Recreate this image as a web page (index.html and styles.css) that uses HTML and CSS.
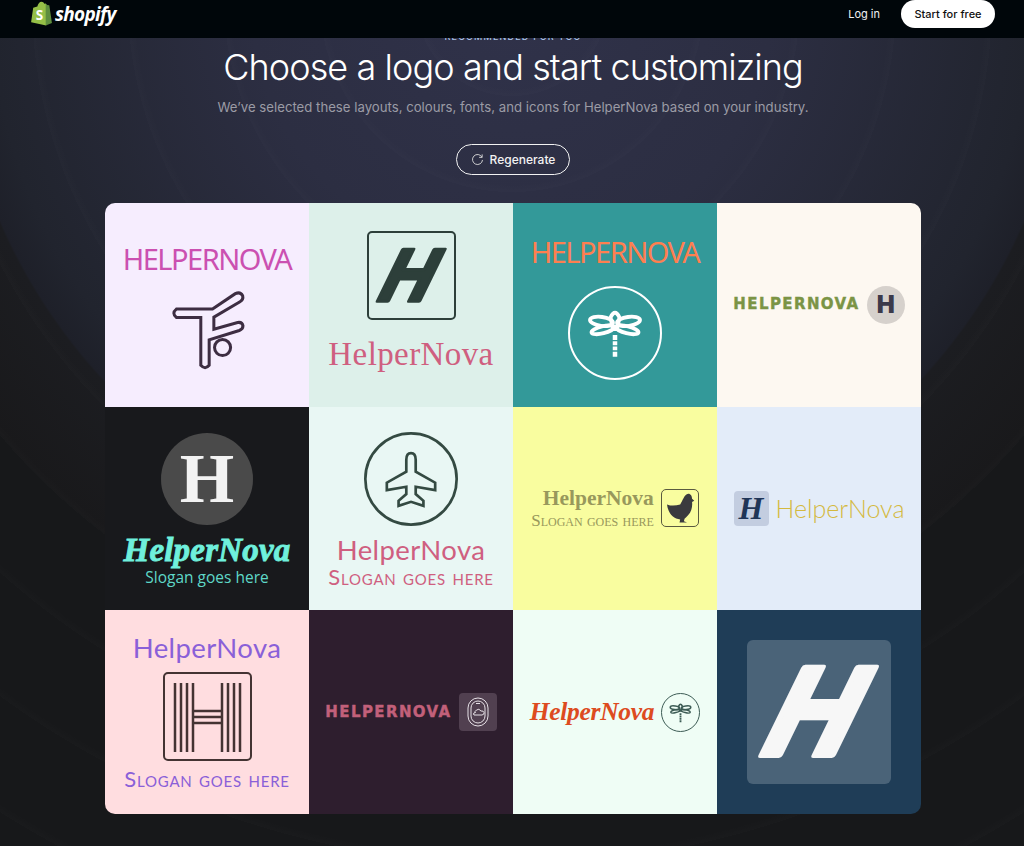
FILE: index.html
```html
<!DOCTYPE html>
<html>
<head>
    <title>Choose a logo</title>
    <link rel="stylesheet" href="styles.css">
</head>
<body>
<svg class="sprite" width="0" height="0">
  <symbol id="dragonfly" viewBox="0 0 280 280">
    <g fill="none" stroke="currentColor" stroke-width="12">
      <ellipse cx="98" cy="104" rx="36" ry="14" transform="rotate(8 98 104)"/>
      <ellipse cx="182" cy="104" rx="36" ry="14" transform="rotate(-8 182 104)"/>
      <ellipse cx="102" cy="130" rx="36" ry="11" transform="rotate(-14 102 130)"/>
      <ellipse cx="178" cy="130" rx="36" ry="11" transform="rotate(14 178 130)"/>
      <path d="M126 92 Q140 62 154 92 L146 128 H134 Z"/>
    </g>
    <path fill="currentColor" d="M133 146h14v16h-14zM133 166h14v12h-14zM133 182h14v12h-14zM133 198h14v16h-14z"/>
  </symbol>
</svg>

<header class="topbar">
  <a class="brand">
    <svg class="brand-bag" viewBox="0 0 21 24">
      <path fill="#95bf47" d="M1 20.500 3 6.500 7 5.200C7.600 2.600 9 .6 11 .6c1.300 0 2.200.9 2.700 2l1.300-.3L16 5l-.5 18.500z"/>
      <path fill="#5e8e3e" d="M15 2.300l1.500 1.500 1.700.2c.2 0 .3.100.3.300L21 21l-6 2.500z"/>
      <text class="brand-s" x="5.500" y="18">S</text>
    </svg>
    <span class="brand-name">shopify</span>
  </a>
  <nav class="topbar-nav">
    <a class="login">Log in</a>
    <a class="start-btn">Start for free</a>
  </nav>
</header>

<main class="page">
  <p class="eyebrow">Recommended for you</p>
  <h1>Choose a logo and start customizing</h1>
  <p class="sub">We’ve selected these layouts, colours, fonts, and icons for HelperNova based on your industry.</p>
  <button type="button" class="regen-btn">
    <svg viewBox="0 0 14 14" class="regen-icon"><path d="M11.800 4.500A5.400 5.400 0 1 0 12.400 7.500M12 1.500v3.200H8.800"/></svg>
    Regenerate
  </button>

  <section class="logo-grid">
    <div class="cell c1">
      <span class="wordmark">HELPERNOVA</span>
      <svg class="gymnast" viewBox="0 0 230 245">
        <path d="M22 60H130L198 14Q213 7 220 20Q223 32 212 38L134 84V120L205 100Q219 98 221 110Q221 120 210 124L120 152V228Q108 242 95 228V85H22Q7 72 22 60Z"/>
        <circle cx="160" cy="175" r="24"/>
      </svg>
    </div>

    <div class="cell c2">
      <div class="mark-box">
        <svg viewBox="0 0 100 100"><text class="brush-h" x="50" y="80" transform="translate(24 0) skewX(-26)">H</text></svg>
      </div>
      <span class="wordmark">HelperNova</span>
    </div>

    <div class="cell c3">
      <span class="wordmark">HELPERNOVA</span>
      <div class="ring"><svg><use href="#dragonfly"/></svg></div>
    </div>

    <div class="cell row c4">
      <span class="wordmark">HELPERNOVA</span>
      <div class="badge">H</div>
    </div>

    <div class="cell c5">
      <div class="disc">H</div>
      <span class="wordmark">HelperNova</span>
      <span class="slogan">Slogan goes here</span>
    </div>

    <div class="cell c6">
      <svg class="plane" viewBox="0 0 280 280">
        <circle cx="140" cy="140" r="136"/>
        <path d="M126 83Q126 63 140 63Q154 63 154 83V118L212 151V173L154 163V185L177 205V220L140 208L103 220V205L126 185V163L68 173V151L126 118Z"/>
      </svg>
      <span class="wordmark">HelperNova</span>
      <span class="slogan">Slogan goes here</span>
    </div>

    <div class="cell row c7">
      <div class="stack">
        <span class="wordmark">HelperNova</span>
        <span class="slogan">Slogan goes here</span>
      </div>
      <div class="hen-box">
        <svg viewBox="0 0 115 115"><path d="M16 46C30 52 45 50 58 46C66 36 70 14 84 12C92 12 96 20 96 28L103 34L96 38C98 55 94 72 78 86L72 92L70 100L80 104H56L58 94C38 92 20 78 16 46Z"/></svg>
      </div>
    </div>

    <div class="cell row c8">
      <div class="gothic">H</div>
      <span class="wordmark">HelperNova</span>
    </div>

    <div class="cell c9">
      <span class="wordmark">HelperNova</span>
      <div class="stripe-box">
        <svg viewBox="0 0 85 85">
          <path d="M10 9V78M16 9V78M22 9V78M28 9V78M57 9V78M63 9V78M69 9V78M75 9V78M28 37H57M28 43H57M28 49H57"/>
        </svg>
      </div>
      <span class="slogan">Slogan goes here</span>
    </div>

    <div class="cell row c10">
      <span class="wordmark">HELPERNOVA</span>
      <div class="window-box">
        <svg viewBox="0 0 38 38">
          <rect x="9" y="5" width="20" height="28" rx="10"/>
          <rect x="12" y="8" width="14" height="22" rx="7"/>
          <path d="M15 22h8q2.500-.5 2-2.500t-3-1.500q-2-3-4.500-1t-1 2.500q-2 0-2 1.500zM17 10.500h4"/>
        </svg>
      </div>
    </div>

    <div class="cell row c11">
      <span class="wordmark">HelperNova</span>
      <div class="small-ring"><svg><use href="#dragonfly"/></svg></div>
    </div>

    <div class="cell c12">
      <div class="mark-box">
        <svg viewBox="0 0 100 100"><text class="brush-h" x="50" y="80" transform="translate(24 0) skewX(-26)">H</text></svg>
      </div>
    </div>
  </section>
</main>
</body>
</html>
```

FILE: styles.css
```css
html, body {
    margin: 0;
    padding: 0;
}
body {
    font-family: Inter, "Liberation Sans", sans-serif;
    color: #fff;
    background-color: #17181a;
    background-image:
        repeating-radial-gradient(circle at 50% 0, rgba(255,255,255,0) 0, rgba(255,255,255,0) 88px, rgba(255,255,255,0.01) 96px),
        radial-gradient(circle at 50% 0, #30324a 0, #2c2e42 260px, #21242e 520px, #1e2029 557px, #1c1d21 559px, #19191b 670px, #17181a 672px);
    background-repeat: no-repeat;
    height: 846px;
    overflow: hidden;
}
.sprite {
    position: absolute;
}

/* top bar */
.topbar {
    position: fixed;
    top: 0;
    left: 0;
    right: 0;
    height: 28px;
    padding: 0 29px 10px 30px;
    background-color: #00060a;
    display: flex;
    justify-content: space-between;
    align-items: center;
    z-index: 2;
}
.brand {
    display: flex;
    align-items: center;
    gap: 3px;
    margin-top: -1px;
}
.brand-bag {
    width: 22px;
    height: 25px;
}
.brand-s {
    font-family: "Open Sans", sans-serif;
    font-weight: 700;
    font-size: 13px;
    fill: #fff;
}
.brand-name {
    font-family: "Open Sans", sans-serif;
    font-weight: 700;
    font-style: italic;
    font-size: 19px;
    letter-spacing: -0.7px;
    color: #fff;
}
.topbar-nav {
    display: flex;
    align-items: center;
    gap: 21px;
}
.login {
    font-size: 11px;
    font-weight: 400;
    color: #f2f2f2;
}
.start-btn {
    background-color: #fff;
    color: #111;
    font-size: 11px;
    font-weight: 500;
    width: 94px;
    height: 28px;
    border-radius: 14px;
    display: flex;
    align-items: center;
    justify-content: center;
}

/* hero */
.page {
    display: flex;
    flex-direction: column;
    align-items: center;
    padding: 31px 0 0 2px;
}
.eyebrow {
    margin: 0;
    font-size: 9px;
    line-height: 12px;
    font-weight: 500;
    letter-spacing: 1.2px;
    text-transform: uppercase;
    color: #a9c4e8;
}
h1 {
    margin: 1px 0 0;
    font-size: 36px;
    line-height: 46px;
    font-weight: 300;
    letter-spacing: -0.9px;
}
.sub {
    margin: 8px 0 0;
    font-size: 13.2px;
    line-height: 19px;
    color: #9b9ba5;
}
.regen-btn {
    margin-top: 27px;
    width: 114px;
    height: 31px;
    background: none;
    border: 1.5px solid #f2f2f2;
    border-radius: 16px;
    color: #f2f2f2;
    font-family: inherit;
    font-size: 12px;
    font-weight: 500;
    display: flex;
    align-items: center;
    justify-content: center;
    gap: 6px;
    padding: 0;
}
.regen-icon {
    width: 13px;
    height: 13px;
    fill: none;
    stroke: #d8d8d8;
    stroke-width: 1;
}

/* logo grid */
.logo-grid {
    margin-top: 28px;
    display: grid;
    grid-template-columns: repeat(4, 204px);
    grid-auto-rows: 203.67px;
    border-radius: 10px;
    overflow: hidden;
}
.cell {
    display: flex;
    flex-direction: column;
    align-items: center;
    justify-content: center;
    line-height: 1;
    box-sizing: border-box;
}
.cell.row {
    flex-direction: row;
    gap: 7px;
}
.wordmark, .slogan {
    display: block;
    white-space: nowrap;
}
.slogan {
    font-variant: small-caps;
}

.c1 {
    background-color: #f6edfe;
    padding-top: 5px;
}
.c1 .wordmark, .c3 .wordmark {
    font-family: "Noto Sans", sans-serif;
    font-size: 29px;
    letter-spacing: -1.5px;
}
.c1 .wordmark {
    color: #cb50b1;
    margin-bottom: 16px;
}
.gymnast {
    width: 77px;
    height: 82px;
}
.gymnast path, .gymnast circle {
    fill: none;
    stroke: #3d2d42;
    stroke-width: 9;
}

.c2 {
    background-color: #ddf0ea;
    padding-bottom: 8px;
}
.c2 .wordmark {
    font-family: "Liberation Serif", serif;
    font-size: 33px;
    letter-spacing: 0.4px;
    color: #cf5f80;
    margin-top: 18px;
}
.mark-box {
    width: 85px;
    height: 85px;
    border: 2px solid #2d3f3a;
    border-radius: 5px;
}
.mark-box svg {
    display: block;
    width: 100%;
    height: 100%;
    overflow: visible;
}
.brush-h {
    font-family: "Open Sans", sans-serif;
    font-weight: 700;
    font-size: 85px;
    text-anchor: middle;
    fill: #2d3f3a;
    stroke: #2d3f3a;
    stroke-width: 4;
    stroke-linejoin: round;
}

.c3 {
    background-color: #339999;
    padding-top: 8px;
}
.c3 .wordmark {
    color: #ff7f50;
    margin-bottom: 20px;
}
.ring {
    width: 90px;
    height: 90px;
    border: 2px solid #fff;
    border-radius: 50%;
    color: #fff;
}
.ring svg {
    display: block;
    width: 100%;
    height: 100%;
}

.c4 {
    background-color: #fdf8f1;
}
.c4 .wordmark, .c10 .wordmark {
    font-family: "DejaVu Sans", sans-serif;
    font-weight: 700;
    font-size: 15px;
    letter-spacing: 1.4px;
    -webkit-text-stroke: 0.4px currentColor;
}
.c4 .wordmark {
    color: #7b9445;
}
.badge {
    width: 38px;
    height: 38px;
    border-radius: 50%;
    background-color: #d6d1cc;
    color: #3b3a4a;
    font-family: Inter, sans-serif;
    font-weight: 900;
    font-size: 24px;
    display: flex;
    align-items: center;
    justify-content: center;
}

.c5 {
    background-color: #18191c;
    padding-top: 2px;
}
.disc {
    width: 92px;
    height: 92px;
    border-radius: 50%;
    background-color: #4a4a4a;
    color: #f2f2f2;
    font-family: "Liberation Serif", serif;
    font-weight: 700;
    font-size: 70px;
    display: flex;
    align-items: center;
    justify-content: center;
}
.c5 .wordmark {
    font-family: "Liberation Serif", serif;
    font-weight: 700;
    font-style: italic;
    font-size: 33px;
    letter-spacing: 0.2px;
    color: #6ff0dc;
    -webkit-text-stroke: 0.9px #6ff0dc;
    margin-top: 9px;
}
.c5 .slogan {
    font-family: "Open Sans", sans-serif;
    font-variant: normal;
    font-size: 15.5px;
    color: #5fd8c8;
    margin-top: 3px;
}

.c6 {
    background-color: #e9f7f4;
    padding-top: 3px;
}
.plane {
    width: 94px;
    height: 94px;
}
.plane circle, .plane path {
    fill: none;
    stroke: #344a42;
    stroke-width: 8;
}
.c6 .wordmark, .c9 .wordmark {
    font-family: "Lato", sans-serif;
    font-weight: 400;
    font-size: 27.5px;
    letter-spacing: 0.4px;
}
.c6 .slogan, .c9 .slogan {
    font-family: "Lato", sans-serif;
    font-size: 22px;
    letter-spacing: 0.8px;
}
.c6 .wordmark, .c6 .slogan {
    color: #cf5f80;
}
.c6 .wordmark {
    margin-top: 10px;
}
.c6 .slogan {
    margin-top: 3px;
}

.c7 {
    background-color: #f9fd9f;
}
.stack {
    display: flex;
    flex-direction: column;
    align-items: flex-end;
    gap: 2px;
}
.c7 .wordmark {
    font-family: "Liberation Serif", serif;
    font-weight: 700;
    font-size: 21.5px;
    color: #98985c;
}
.c7 .slogan {
    font-family: "Liberation Serif", serif;
    font-size: 17px;
    color: #98985c;
}
.hen-box {
    width: 36px;
    height: 36px;
    border: 1.5px solid #5a5a40;
    border-radius: 5px;
}
.hen-box svg {
    display: block;
    width: 100%;
    height: 100%;
    fill: #3a3a3e;
}

.c8 {
    background-color: #e3ecf9;
}
.gothic {
    width: 35px;
    height: 35px;
    border-radius: 4px;
    background-color: #c3cde0;
    color: #1f3557;
    font-family: "Liberation Serif", serif;
    font-weight: 700;
    font-style: italic;
    font-size: 32px;
    display: flex;
    align-items: center;
    justify-content: center;
}
.c8 .wordmark {
    font-family: "Lato", sans-serif;
    font-weight: 300;
    font-size: 25px;
    color: #d4b93f;
}

.c9 {
    background-color: #ffdde0;
}
.c9 .wordmark, .c9 .slogan {
    color: #8a60d8;
}
.c9 .slogan {
    margin-top: 7px;
}
.stripe-box {
    width: 85px;
    height: 85px;
    border: 2.5px solid #443333;
    border-radius: 5px;
    margin-top: 10px;
}
.stripe-box svg {
    display: block;
    width: 100%;
    height: 100%;
    fill: none;
    stroke: #443333;
    stroke-width: 2.5;
}

.c10 {
    background-color: #2e1e2e;
}
.c10 .wordmark {
    color: #c2607a;
}
.window-box {
    width: 38px;
    height: 38px;
    border-radius: 4px;
    background-color: #514050;
}
.window-box svg {
    display: block;
    width: 100%;
    height: 100%;
    fill: none;
    stroke: #e6e0e6;
    stroke-width: 1;
}

.c11 {
    background-color: #effdf5;
}
.c11 .wordmark {
    font-family: "Liberation Serif", serif;
    font-style: italic;
    font-weight: 700;
    font-size: 25.5px;
    letter-spacing: -0.3px;
    color: #dd4b1f;
}
.small-ring {
    width: 37px;
    height: 37px;
    border: 1px solid #3d5c55;
    border-radius: 50%;
    color: #3d5c55;
}
.small-ring svg {
    display: block;
    width: 100%;
    height: 100%;
}

.c12 {
    background-color: #1f3d57;
}
.c12 .mark-box {
    width: 144px;
    height: 144px;
    border: none;
    border-radius: 6px;
    background-color: #4a6378;
}
.c12 .brush-h {
    fill: #f7f7f7;
    stroke: #f7f7f7;
}
```
